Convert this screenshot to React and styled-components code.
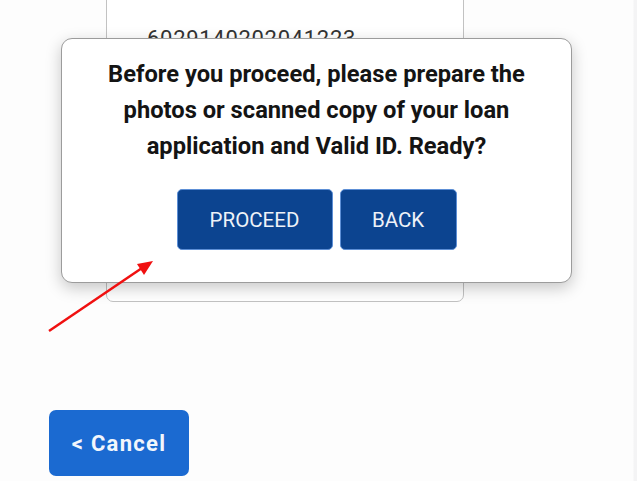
import styled, { createGlobalStyle } from 'styled-components';

const GlobalStyle = createGlobalStyle`
body {
    margin: 0;
    background: #fdfdfd;
    font-family: Roboto, "Liberation Sans", sans-serif;
}
`

const Page = styled.div`
position: relative;
width: 637px;
height: 481px;
overflow: hidden;
display: flex;
flex-direction: column;
background: linear-gradient(to right, #fdfdfd 0, #fdfdfd 633px, #f4f4f5 634px);
`

const Card = styled.div`
margin: -20px 0 0 106px;
width: 358px;
height: 322px;
box-sizing: border-box;
border: 1px solid #c2c2c2;
border-radius: 7px;
padding: 45px 0 0 40px;
background: #fff;
`

const AccountNo = styled.p`
margin: 0;
font-size: 22px;
line-height: 26px;
color: #333;
letter-spacing: 0.7px;
`

const CancelButton = styled.button`
margin: 108px 0 0 49px;
width: 140px;
height: 66px;
border: none;
border-radius: 7px;
background: #1b6ad1;
color: #f2f6fc;
font-family: Roboto, "Liberation Sans", sans-serif;
font-weight: bold;
font-size: 22px;
letter-spacing: 1.3px;
`

const Modal = styled.div`
position: absolute;
left: 61px;
top: 38px;
width: 511px;
height: 245px;
box-sizing: border-box;
border: 1.5px solid #9c9c9c;
border-radius: 11px;
background: #fff;
box-shadow: 0 5px 16px rgba(0, 0, 0, 0.22);
display: flex;
flex-direction: column;
align-items: center;
padding-top: 17px;
`

const Message = styled.p`
margin: 0;
font-weight: bold;
font-size: 23.7px;
line-height: 36px;
color: #141414;
text-align: center;
`

const ButtonRow = styled.div`
display: flex;
gap: 7px;
margin-top: 25px;
`

const DialogButton = styled.button`
width: ${p => p.$w}px;
height: 61px;
border: 1px solid #5d8fd6;
border-radius: 5px;
background: #0c4490;
color: #eef2f8;
font-family: Roboto, "Liberation Sans", sans-serif;
font-size: 20.5px;
`

const Arrow = styled.svg`
position: absolute;
left: 0;
top: 0;
pointer-events: none;
`

const App = () => {
    return (
        <>
            <GlobalStyle />
            <Page>
                <Card>
                    <AccountNo>6029140202041223</AccountNo>
                </Card>
                <CancelButton type="button">&lt; Cancel</CancelButton>
                <Modal>
                    <Message>
                        Before you proceed, please prepare the<br />
                        photos or scanned copy of your loan<br />
                        application and Valid ID. Ready?
                    </Message>
                    <ButtonRow>
                        <DialogButton $w={156} type="button">PROCEED</DialogButton>
                        <DialogButton $w={117} type="button">BACK</DialogButton>
                    </ButtonRow>
                </Modal>
                <Arrow width="637" height="481">
                    <line x1="49" y1="331" x2="142" y2="268" stroke="#f01010" strokeWidth="2.5" />
                    <polygon points="153,261 137,264 144,275" fill="#f01010" />
                </Arrow>
            </Page>
        </>
    );
};

export default App;
